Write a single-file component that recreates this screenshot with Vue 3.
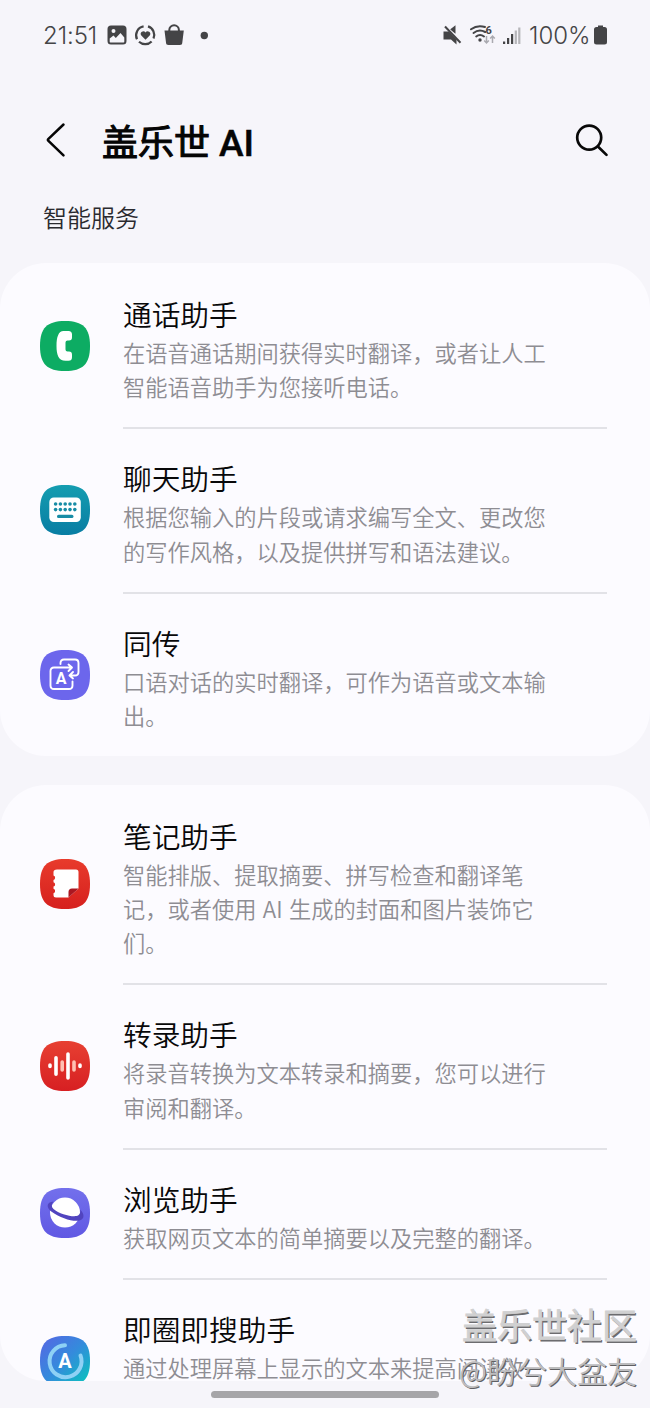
<script setup>
const groups = [
  {
    id: 'first',
    items: [
      { icon: 'phone', title: '通话助手', lines: ['在语音通话期间获得实时翻译，或者让人工', '智能语音助手为您接听电话。'] },
      { icon: 'keyboard', title: '聊天助手', lines: ['根据您输入的片段或请求编写全文、更改您', '的写作风格，以及提供拼写和语法建议。'] },
      { icon: 'interpreter', title: '同传', lines: ['口语对话的实时翻译，可作为语音或文本输', '出。'] },
    ],
  },
  {
    id: 'second',
    items: [
      { icon: 'notes', title: '笔记助手', lines: ['智能排版、提取摘要、拼写检查和翻译笔', '记，或者使用 AI 生成的封面和图片装饰它', '们。'] },
      { icon: 'recorder', title: '转录助手', lines: ['将录音转换为文本转录和摘要，您可以进行', '审阅和翻译。'] },
      { icon: 'browser', title: '浏览助手', lines: ['获取网页文本的简单摘要以及完整的翻译。'] },
      { icon: 'circle', title: '即圈即搜助手', lines: ['通过处理屏幕上显示的文本来提高阅读效'] },
    ],
  },
]
const squircle = 'M25 0C43 0 50 7 50 25S43 50 25 50 0 43 0 25 7 0 25 0Z'
const dotColumns = [15.6, 20.4, 25.2, 30, 34.8]
</script>

<template>
  <main class="screen">
    <header class="status">
      <span class="clock">21:51</span>
      <svg class="left-icons" width="110" height="24" viewBox="0 0 110 24" fill="#444446">
        <path fill-rule="evenodd" d="M4 2.5h12a3.5 3.5 0 0 1 3.5 3.5v12a3.5 3.5 0 0 1-3.5 3.5H4A3.500 3.500 0 0 1 .5 18V6A3.500 3.500 0 0 1 4 2.500ZM2.700 15.500v3c0 .6.4 1 1 1h12.600c.6 0 1-.4 1-1v-4L13.500 10l-4.700 5-2.300-2.500ZM6.500 6a2 2 0 1 0 0 4 2 2 0 0 0 0-4Z" />
        <g fill="none" stroke="#444446" stroke-width="2.200">
          <path d="M36.600 3.400A9 9 0 0 0 30 16.200M32 18.800a9 9 0 0 0 12.600-.4M46.500 15.500A9 9 0 0 0 41 3.400" />
        </g>
        <path d="M38.500 16.800 34.300 12.500a2.400 2.400 0 0 1 4.200-3.100 2.400 2.400 0 0 1 4.200 3.100Z" />
        <path d="M57.500 7.500h19.300l-1.500 12a2.500 2.500 0 0 1-2.500 2.500H61.500a2.500 2.500 0 0 1-2.500-2.500Z" />
        <path d="M62.300 9V7a4.800 4.800 0 0 1 9.600 0v2" fill="none" stroke="#444446" stroke-width="2" />
        <circle cx="97.300" cy="12.500" r="3.700" />
      </svg>
      <svg class="right-icons" width="82" height="26" viewBox="0 0 82 26" fill="#444446">
        <path d="M8 7.500l5.500-4.200v8.500Z" />
        <path d="M2.500 4 18.500 21" stroke="#f6f5fa" stroke-width="3.600" />
        <path d="M1.500 9.500H7l7.500 8v5L9 17.500H1.500Z" />
        <path d="M3 4.500 18.500 20.700" stroke="#444446" stroke-width="2" />
        <g fill="none" stroke="#444446" stroke-width="2" stroke-linecap="round">
          <path d="M29 7.300Q35.500 2.500 43 5M31.500 11Q37 6.700 43.200 10M34.200 14.500Q38 11.500 42 14.500" />
        </g>
        <circle cx="38" cy="18" r="1.700" />
        <text x="43.500" y="11.700" class="wifi-number">6</text>
        <path d="M44.500 14v7m-2.300-2.500 2.300 2.500 2.300-2.500M50.500 21v-7m-2.300 2.500 2.300-2.500 2.300 2.500" fill="none" stroke="#aaaab0" stroke-width="1.500" />
        <rect x="61" y="19.500" width="2.200" height="2.500" />
        <rect x="65" y="16" width="2.200" height="6" />
        <rect x="69" y="12" width="2.200" height="10" />
        <rect x="72.700" y="8.500" width="2.200" height="13.500" fill="#b6b6ba" />
        <rect x="76.200" y="5.500" width="2.200" height="16.500" fill="#b6b6ba" />
      </svg>
      <span class="battery-text">100%</span>
      <svg width="14" height="20" viewBox="0 0 14 20" class="battery" fill="#444446">
        <path d="M4 .5h5V2h1.500A2.500 2.500 0 0 1 13 4.500V17a2.500 2.500 0 0 1-2.500 2.500h-8A2.500 2.500 0 0 1 0 17V4.500A2.500 2.500 0 0 1 2.500 2H4Z" />
      </svg>
    </header>

    <nav class="heading">
      <svg class="back" width="22" height="36" viewBox="0 0 22 36">
        <path d="M18.500 2.500 3.200 17.200q-.7.700 0 1.400L18.500 33.300" fill="none" stroke="#050505" stroke-width="2.500" stroke-linecap="round" />
      </svg>
      <h1>盖乐世 <span class="latin">AI</span></h1>
      <svg class="search" width="36" height="36" viewBox="0 0 36 36" fill="none" stroke="#080808" stroke-width="2.700" stroke-linecap="round">
        <circle cx="15.200" cy="14.600" r="12" /><path d="m23.900 23.500 8.600 8.400" />
      </svg>
    </nav>

    <h2 class="section-name">智能服务</h2>

    <section v-for="group in groups" :key="group.id" class="card" :class="group.id">
      <article v-for="item in group.items" :key="item.title" class="row" :class="item.icon">
        <svg class="app-icon" width="50" height="50" viewBox="0 0 50 50">
          <template v-if="item.icon === 'phone'">
            <path :d="squircle" fill="#0dac63" />
            <path d="M23.500 10h5q3.500 0 3.500 3.500v2.800q0 3.200-3 3.200h-1.500q-2 0-2 2v7q0 2 2 2h1.500q3 0 3 3.200v2.500q0 3.500-3.500 3.500h-3C18.500 39.700 16.500 34 16.500 25S18.500 10 23.500 10Z" fill="#fff" />
          </template>
          <template v-else-if="item.icon === 'keyboard'">
            <defs><linearGradient id="kb" x2="0" y2="1"><stop stop-color="#159db0" /><stop offset="1" stop-color="#087da3" /></linearGradient></defs>
            <path :d="squircle" fill="url(#kb)" />
            <rect x="9.300" y="12.500" width="31.500" height="24.500" rx="4.500" fill="#fff" />
            <g fill="#178ca5">
              <template v-for="x in dotColumns" :key="x"><circle :cx="x" cy="19" r="1.800" /><circle :cx="x" cy="24.600" r="1.800" /></template>
              <rect x="17" y="29.800" width="16.500" height="3.200" rx="1.600" />
            </g>
          </template>
          <template v-else-if="item.icon === 'interpreter'">
            <path :d="squircle" fill="#6c66ec" />
            <g fill="none" stroke="#fff" stroke-width="1.900" stroke-linecap="round" stroke-linejoin="round">
              <path d="M20.500 14v-1q0-3.500 3.500-3.500h11q3.500 0 3.500 3.500v9q0 3.500-3.500 3.500h-5.500M33 22l-3.500 3.500L33 28.500" />
              <path d="M31.500 17.500H14q-3.500 0-3.500 3.500v14.500q0 3.500 3.500 3.500h15q3.500 0 3.500-3.500v-4M28.500 14.500l3.500 3-3.500 3.500" />
            </g>
            <text x="21" y="34" class="letter">A</text>
          </template>
          <template v-else-if="item.icon === 'notes'">
            <defs><linearGradient id="note" x2="0" y2="1"><stop stop-color="#e83b2c" /><stop offset="1" stop-color="#d6201e" /></linearGradient></defs>
            <path :d="squircle" fill="url(#note)" />
            <path d="M17 10.500h19q2.500 0 2.500 2.500v16.500l-10 9H16q-2.500 0-2.500-2.500v-1.800a2.300 2.300 0 0 0 0-4.400v-2.200a2.300 2.300 0 0 0 0-4.400V21a2.300 2.300 0 0 0 0-4.400V13q0-2.500 3.500-2.500Z" fill="#fff" />
            <path d="M28.500 38.500v-5.500q0-3.500 3.500-3.500h6.500Z" fill="#aa1721" />
          </template>
          <template v-else-if="item.icon === 'recorder'">
            <defs><linearGradient id="rec" x2="0" y2="1"><stop stop-color="#e74032" /><stop offset="1" stop-color="#d71f22" /></linearGradient></defs>
            <path :d="squircle" fill="url(#rec)" />
            <g stroke="#fff" stroke-width="3.600" stroke-linecap="round">
              <path d="M10 24v1.500M16 16.800v16.500M28 13v24M40 24v1.500" />
              <path d="M22.200 21v8M34 21v8" stroke="#ffc0b2" />
            </g>
          </template>
          <template v-else-if="item.icon === 'browser'">
            <defs><linearGradient id="web" x2="0" y2="1"><stop stop-color="#7370ec" /><stop offset="1" stop-color="#6058e3" /></linearGradient></defs>
            <path :d="squircle" fill="url(#web)" />
            <circle cx="25" cy="24.600" r="15" fill="#fff" />
            <path d="M13.500 13.500C6 14 6 20 12 24c8 6 21 10 27.500 8.500 5.500-1.500 5-7 .5-11 1 3-.5 6-3.500 6.600C31 29 19 26 13.500 21c-2.500-2.500-2.200-5 0-7.500Z" fill="#5144bf" />
          </template>
          <template v-else>
            <defs><linearGradient id="circ" x2="1" y2="1"><stop stop-color="#5765e4" /><stop offset=".5" stop-color="#348bdc" /><stop offset="1" stop-color="#05c9ba" /></linearGradient></defs>
            <path :d="squircle" fill="url(#circ)" />
            <path d="M25 9.200A16 16 0 1 0 40.500 19.500" fill="none" stroke="#8ed1f5" stroke-width="4" stroke-linecap="round" />
            <text x="25" y="32" class="letter big">A</text>
          </template>
        </svg>
        <div class="content">
          <h3>{{ item.title }}</h3>
          <p v-for="line in item.lines" :key="line">{{ line }}</p>
        </div>
      </article>
    </section>

    <div class="home-bar"></div>
    <div class="watermark">
      <strong>盖乐世社区</strong>
      <span>@盼兮大盆友</span>
    </div>
  </main>
</template>

<style>
body { background: #f6f5fa; }
</style>

<style scoped>
* { box-sizing: border-box; }
svg { display: block; flex: none; }
h1, h2, h3, p { margin: 0; font-weight: 350; white-space: nowrap; }
.screen {
  position: relative;
  width: 650px;
  height: 1408px;
  overflow: hidden;
  background: #f6f5fa;
  font-family: "Noto Sans CJK SC", sans-serif;
}
.status {
  display: flex;
  height: 70px;
  padding: 0 42px 0 43px;
  align-items: center;
  color: #444446;
  font-family: Inter, Roboto, sans-serif;
  font-weight: 300;
}
.clock { width: 64px; font-size: 24px; letter-spacing: -0.1px; }
.right-icons { margin-left: auto; margin-right: 5px; }
.battery-text { width: 65px; font-size: 24px; white-space: nowrap; }
.wifi-number { font: 700 11px Roboto, sans-serif; }
.heading {
  display: flex;
  height: 120px;
  padding: 0 40px 0 45px;
  align-items: center;
}
.back { margin-top: 20px; }
.heading h1 {
  margin: 24px 0 0 35px;
  font-size: 36px;
  line-height: 54px;
  font-weight: 400;
  color: #050505;
  -webkit-text-stroke: 1.1px #050505;
}
.latin { margin-left: 1px; font-family: Roboto, sans-serif; font-weight: 500; font-size: 37px; -webkit-text-stroke-width: 0.5px; }
.search { margin: 21px 0 0 auto; }
.section-name { height: 73px; padding: 9px 43px 0; font-size: 24px; line-height: 36px; color: #2a2a2f; }
.card { overflow: hidden; background: #fcfbff; border-radius: 46px; }
.first { height: 493px; padding-top: 1.8px; }
.second { height: 596px; margin-top: 29px; padding-top: 1.6px; }
.row { display: flex; align-items: center; padding: 0 43px 0 40px; }
.app-icon { margin-bottom: 3px; }
.content { flex: 1; margin-left: 33px; padding: 28px 0 24px; border-bottom: 2px solid #e2e2e7; }
.row:last-child .content { border-color: transparent; }
.row.circle .content { padding-bottom: 58px; }
.content h3 { font-size: 28.700px; line-height: 42px; color: #080809; }
.content p { font-size: 22.250px; line-height: 34.250px; color: #8e8d93; word-spacing: 1.4px; }
.letter { font: 700 16px Roboto, sans-serif; fill: #fff; text-anchor: middle; }
.letter.big { font-size: 20px; }
.home-bar { position: absolute; left: 211px; top: 1391px; width: 228px; height: 7px; border-radius: 4px; background: #a6a5a8; }
.watermark {
  position: absolute;
  right: 13px;
  top: 1302px;
  display: grid;
  justify-items: end;
  color: #d0d0d1;
  white-space: nowrap;
}
.watermark strong {
  font-size: 35px;
  line-height: 44px;
  font-weight: 400;
  -webkit-text-stroke: 0.8px #d0d0d1;
  text-shadow: 1.500px 1.500px 0 #6c6c6f;
}
.watermark span { font-size: 30px; line-height: 48px; font-weight: 350; color: #bcbcbe; text-shadow: 1px 1px 0 #606063; }
</style>
